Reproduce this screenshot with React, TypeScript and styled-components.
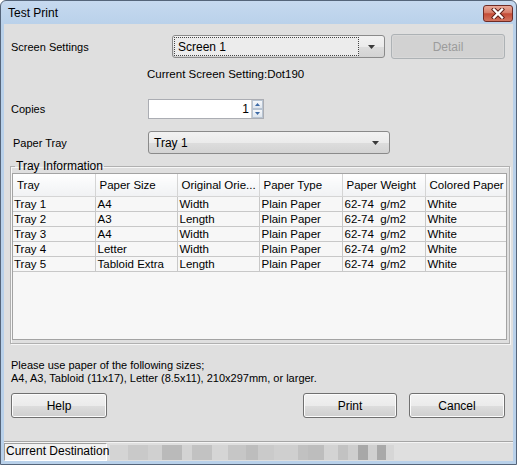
import React from 'react'
import styled, { createGlobalStyle } from 'styled-components'

const GlobalStyle = createGlobalStyle`
  html, body {
    margin: 0;
    padding: 0;
    background: #ffffff;
  }
  body {
    font-family: "Liberation Sans", Arial, sans-serif;
    font-size: 11px;
    color: #000;
  }
`

const Window = styled.div`
  width: 517px;
  height: 465px;
  box-sizing: border-box;
  border: 1px solid #55657a;
  border-radius: 6px 6px 0 0;
  background: linear-gradient(#c6d9ef, #b9d1ea 24px);
  display: flex;
  flex-direction: column;
  overflow: hidden;
`

const TitleBar = styled.div`
  height: 23px;
  flex: none;
  display: flex;
  align-items: flex-start;
  justify-content: space-between;
  padding: 0 3px 0 7px;
`

const Title = styled.span`
  font-size: 12px;
  line-height: 24px;
`

const CloseButton = styled.div`
  width: 30px;
  height: 17px;
  margin-top: 4px;
  box-sizing: border-box;
  border: 1px solid #6e2b26;
  border-radius: 3px;
  background: linear-gradient(#e9a899, #d67d69 45%, #c44b36 52%, #d27560);
  display: flex;
  align-items: center;
  justify-content: center;
`

const Client = styled.div`
  flex: 1;
  margin: 0 3px 3px 3px;
  background: #dfdfdf;
  display: flex;
  flex-direction: column;
`

const Content = styled.div`
  padding: 10px 8px 0 7px;
  display: flex;
  flex-direction: column;
`

const Row = styled.div<{ $top?: number }>`
  display: flex;
  align-items: center;
  margin-top: ${p => p.$top ?? 0}px;
`

const Label = styled.div<{ $w: number; $indent?: number }>`
  width: ${p => p.$w}px;
  padding-left: ${p => p.$indent ?? 0}px;
  box-sizing: border-box;
  flex: none;
`

const Combo = styled.div<{ $w: number; $h: number }>`
  position: relative;
  width: ${p => p.$w}px;
  height: ${p => p.$h}px;
  box-sizing: border-box;
  border: 1px solid #8a8a8a;
  border-radius: 3px;
  background: linear-gradient(#f2f2f2, #ebebeb 50%, #dddddd 51%, #d3d3d3);
  display: flex;
  align-items: center;
  padding: 1px;
`

const FocusRect = styled.div`
  height: 100%;
  width: 185px;
  box-sizing: border-box;
  border: 1px dotted #444;
  display: flex;
  align-items: center;
  padding-left: 3px;
  background: #ececec;
  font-size: 12px;
`

const ComboText = styled.span`
  padding-left: 4px;
  font-size: 12px;
`

const ComboArrow = styled.svg<{ $right: number }>`
  position: absolute;
  right: ${p => p.$right}px;
  top: 50%;
  margin-top: -2px;
`

const DialogButton = styled.div<{ $w: number; $disabled?: boolean }>`
  width: ${p => p.$w}px;
  height: 25px;
  box-sizing: border-box;
  border: 1px solid ${p => (p.$disabled ? '#adb2b5' : '#707070')};
  border-radius: 3px;
  background: ${p =>
    p.$disabled
      ? '#d2d2d2'
      : 'linear-gradient(#f2f2f2, #ebebeb 50%, #dddddd 51%, #cfcfcf)'};
  color: ${p => (p.$disabled ? '#9c9c9c' : '#000')};
  box-shadow: inset 0 0 0 1px ${p => (p.$disabled ? '#d8d8d8' : '#fcfcfc')};
  display: flex;
  align-items: center;
  justify-content: center;
  font-size: 12px;
  flex: none;
`

const InfoText = styled.div`
  padding-left: 136px;
  margin-top: 8px;
  line-height: 14px;
  font-size: 11.5px;
`

const Spinner = styled.div`
  width: 116px;
  height: 20px;
  box-sizing: border-box;
  border: 1px solid #abadb3;
  background: #fff;
  display: flex;
`

const SpinValue = styled.div`
  flex: 1;
  text-align: right;
  padding-right: 2px;
  line-height: 18px;
  font-size: 12px;
`

const SpinButtons = styled.div`
  width: 11px;
  display: flex;
  flex-direction: column;
  border-left: 1px solid #cfcfcf;
`

const SpinButton = styled.div`
  flex: 1;
  border: 1px solid #b8c4d2;
  background: linear-gradient(#f6f8fb, #dfe6ee);
  display: flex;
  align-items: center;
  justify-content: center;
`

const Fieldset = styled.fieldset`
  margin: 6px -5px 0 -1px;
  padding: 0 2px 1px 1px;
  border: 1px solid #b0b0b0;
  box-shadow: 1px 1px 0 #f6f6f6, inset 1px 1px 0 #f6f6f6;
  height: 184px;
  box-sizing: border-box;
  min-width: 0;
`

const Legend = styled.legend`
  margin-left: 3px;
  padding: 0 1px;
  font-size: 12px;
  line-height: 13px;
`

const ListBox = styled.div`
  height: 167px;
  box-sizing: border-box;
  border: 1px solid #a3a3a3;
  background: #f7f7f7;
  overflow: hidden;
`

const Grid = styled.table`
  border-collapse: collapse;
  table-layout: fixed;
  width: 495px;
`

const HeadCell = styled.th`
  height: 22px;
  padding: 0 0 0 4px;
  text-align: left;
  font-weight: normal;
  font-size: 11.5px;
  background: linear-gradient(#ffffff, #f7f8f9 50%, #f1f2f4);
  border-right: 1px solid #d5d5d5;
  border-bottom: 1px solid #d5d5d5;
  white-space: nowrap;
  overflow: hidden;
`

const Cell = styled.td<{ $pad?: number }>`
  height: 14px;
  padding: 0 0 0 ${p => p.$pad ?? 2}px;
  line-height: 14px;
  font-size: 11.5px;
  border-right: 1px solid #c8c8c8;
  border-bottom: 1px solid #c8c8c8;
  white-space: nowrap;
  overflow: hidden;
`

const Note = styled.div`
  margin-top: 15px;
  line-height: 13px;
  font-size: 11px;
`

const ButtonRow = styled.div`
  margin-top: 8px;
  display: flex;
  align-items: center;
  gap: 12px;
`

const Spacer = styled.div`
  flex: 1;
`

const StatusBar = styled.div`
  margin-top: auto;
  height: 18px;
  border-top: 1px solid #a5a5a5;
  box-shadow: inset 0 1px 0 #f4f4f4;
  display: flex;
  align-items: stretch;
  padding-top: 1px;
`

const StatusPane = styled.div`
  width: 103px;
  box-sizing: border-box;
  border: 1px solid;
  border-color: #a0a0a0 #ffffff #ffffff #a0a0a0;
  background: #f1f1f1;
  font-size: 12px;
  line-height: 15px;
  padding-left: 1px;
  white-space: nowrap;
  flex: none;
`

const Redacted = styled.div`
  margin: 2px 0 1px 3px;
  display: flex;
`

const Blot = styled.div<{ $w: number; $c: string }>`
  width: ${p => p.$w}px;
  background: ${p => p.$c};
`

const columns = [
  { title: 'Tray', w: 82 },
  { title: 'Paper Size', w: 82 },
  { title: 'Original Orie...', w: 82 },
  { title: 'Paper Type', w: 83 },
  { title: 'Paper Weight', w: 83 },
  { title: 'Colored Paper', w: 83 },
]

const trays = [
  ['Tray 1', 'A4', 'Width'],
  ['Tray 2', 'A3', 'Length'],
  ['Tray 3', 'A4', 'Width'],
  ['Tray 4', 'Letter', 'Width'],
  ['Tray 5', 'Tabloid Extra', 'Length'],
]

const blots: [number, string][] = [
  [18, '#d4d4d4'], [20, '#c9c9c9'], [14, '#d0d0d0'], [20, '#bababa'],
  [10, '#d3d3d3'], [20, '#c2c2c2'], [16, '#d5d5d5'], [18, '#c6c6c6'],
  [12, '#bdbdbd'], [16, '#cacaca'], [24, '#cfcfcf'], [10, '#c1c1c1'],
  [16, '#bdbdbd'], [14, '#d3d3d3'], [10, '#c2c2c2'], [10, '#cecece'],
  [10, '#a8a8a8'], [9, '#d0d0d0'], [9, '#a9a9a9'], [8, '#d6d6d6'],
]

const Arrow = ({ right }: { right: number }) => (
  <ComboArrow $right={right} width="7" height="4" viewBox="0 0 7 4">
    <path d="M0 0 H7 L3.5 4 Z" fill="#3a3a3a" />
  </ComboArrow>
)

const App: React.FC = () => {
  return (
    <>
      <GlobalStyle />
      <Window>
        <TitleBar>
          <Title>Test Print</Title>
          <CloseButton>
            <svg width="14" height="11" viewBox="0 0 14 11">
              <path
                d="M3 1.5 L11 9.5 M11 1.5 L3 9.5"
                stroke="#5a1d17"
                strokeWidth="4.2"
                strokeLinecap="square"
              />
              <path
                d="M3 1.5 L11 9.5 M11 1.5 L3 9.5"
                stroke="#ffffff"
                strokeWidth="2.4"
                strokeLinecap="square"
              />
            </svg>
          </CloseButton>
        </TitleBar>

        <Client>
          <Content>
            <Row>
              <Label $w={161}>Screen Settings</Label>
              <Combo $w={213} $h={23}>
                <FocusRect>Screen 1</FocusRect>
                <Arrow right={9} />
              </Combo>
              <Spacer />
              <DialogButton $w={114} $disabled>
                Detail
              </DialogButton>
            </Row>

            <InfoText>Current Screen Setting:Dot190</InfoText>

            <Row $top={18}>
              <Label $w={137}>Copies</Label>
              <Spinner>
                <SpinValue>1</SpinValue>
                <SpinButtons>
                  <SpinButton>
                    <svg width="5" height="3" viewBox="0 0 5 3">
                      <path d="M0 3 H5 L2.5 0 Z" fill="#3d6aa6" />
                    </svg>
                  </SpinButton>
                  <SpinButton>
                    <svg width="5" height="3" viewBox="0 0 5 3">
                      <path d="M0 0 H5 L2.5 3 Z" fill="#3d6aa6" />
                    </svg>
                  </SpinButton>
                </SpinButtons>
              </Spinner>
            </Row>

            <Row $top={12}>
              <Label $w={137} $indent={2}>
                Paper Tray
              </Label>
              <Combo $w={242} $h={23}>
                <ComboText>Tray 1</ComboText>
                <Arrow right={10} />
              </Combo>
            </Row>

            <Fieldset>
              <Legend>Tray Information</Legend>
              <ListBox>
                <Grid>
                  <colgroup>
                    {columns.map(c => (
                      <col key={c.title} width={c.w} />
                    ))}
                  </colgroup>
                  <thead>
                    <tr>
                      {columns.map(c => (
                        <HeadCell key={c.title}>{c.title}</HeadCell>
                      ))}
                    </tr>
                  </thead>
                  <tbody>
                    {trays.map(([tray, size, orient]) => (
                      <tr key={tray}>
                        <Cell $pad={1}>{tray}</Cell>
                        <Cell>{size}</Cell>
                        <Cell>{orient}</Cell>
                        <Cell>Plain Paper</Cell>
                        <Cell>62-74&nbsp;&nbsp;g/m2</Cell>
                        <Cell>White</Cell>
                      </tr>
                    ))}
                  </tbody>
                </Grid>
              </ListBox>
            </Fieldset>

            <Note>
              Please use paper of the following sizes;
              <br />
              A4, A3, Tabloid (11x17), Letter (8.5x11), 210x297mm, or larger.
            </Note>

            <ButtonRow>
              <DialogButton $w={96}>Help</DialogButton>
              <Spacer />
              <DialogButton $w={94}>Print</DialogButton>
              <DialogButton $w={96}>Cancel</DialogButton>
            </ButtonRow>
          </Content>

          <StatusBar>
            <StatusPane>Current Destination</StatusPane>
            <Redacted>
              {blots.map(([w, c], i) => (
                <Blot key={i} $w={w} $c={c} />
              ))}
            </Redacted>
          </StatusBar>
        </Client>
      </Window>
    </>
  )
}

export default App
